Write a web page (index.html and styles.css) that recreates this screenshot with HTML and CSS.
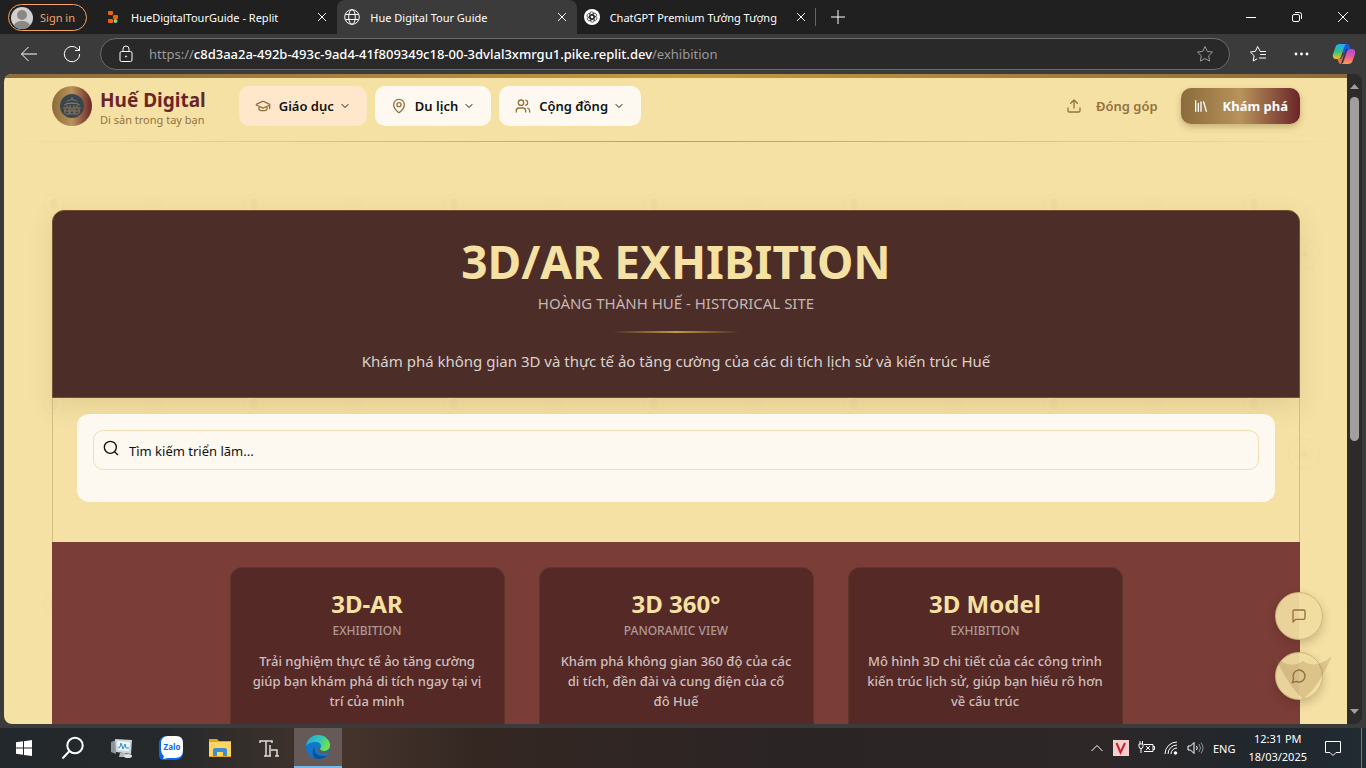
FILE: index.html
```html
<!DOCTYPE html>
<html lang="vi">
<head>
<meta charset="utf-8">
<title>Hue Digital Tour Guide</title>
<link rel="stylesheet" href="styles.css">
</head>
<body>
<div class="tabbar">
  <button class="signin">
    <svg width="24" height="24" viewBox="0 0 24 24"><defs><clipPath id="av"><circle cx="12" cy="12" r="11"/></clipPath></defs><circle cx="12" cy="12" r="11" fill="#d2d0ce"/><g clip-path="url(#av)" fill="#8a8886"><circle cx="12" cy="9" r="5"/><ellipse cx="12" cy="20" rx="8" ry="5"/></g></svg>
    <span>Sign in</span>
  </button>
  <div class="tabs">
    <div class="tab">
      <svg width="16" height="16" viewBox="0 0 16 16"><g fill="#f26207"><rect x="3" y="2" width="5" height="4" rx="1"/><rect x="8" y="6" width="5" height="4" rx="1"/><rect x="3" y="10" width="5" height="4" rx="1"/></g><circle cx="10.500" cy="12" r="2" fill="#6bdc8a"/></svg>
      <span class="tab-name">HueDigitalTourGuide - Replit</span>
      <button class="tab-close" aria-label="Close tab"><svg width="10" height="10" viewBox="0 0 10 10"><path d="M1 1l8 8M9 1l-8 8"/></svg></button>
    </div>
    <div class="tab tab-active">
      <svg class="line" width="16" height="16" viewBox="0 0 16 16"><circle cx="8" cy="8" r="7.300"/><ellipse cx="8" cy="8" rx="3.300" ry="7.300"/><path d="M1.500 5.500h13M1.500 10.500h13"/></svg>
      <span class="tab-name">Hue Digital Tour Guide</span>
      <button class="tab-close" aria-label="Close tab"><svg width="10" height="10" viewBox="0 0 10 10"><path d="M1 1l8 8M9 1l-8 8"/></svg></button>
    </div>
    <div class="tab">
      <svg width="16" height="16" viewBox="0 0 16 16"><circle cx="8" cy="8" r="8" fill="#fff"/><g fill="none" stroke="#222" stroke-width=".7"><rect x="5.700" y="2.800" width="4" height="7.500" rx="2"/><rect x="5.700" y="2.800" width="4" height="7.500" rx="2" transform="rotate(60 8 8)"/><rect x="5.700" y="2.800" width="4" height="7.500" rx="2" transform="rotate(120 8 8)"/><rect x="5.700" y="2.800" width="4" height="7.500" rx="2" transform="rotate(180 8 8)"/><rect x="5.700" y="2.800" width="4" height="7.500" rx="2" transform="rotate(240 8 8)"/><rect x="5.700" y="2.800" width="4" height="7.500" rx="2" transform="rotate(300 8 8)"/></g></svg>
      <span class="tab-name">ChatGPT Premium Tưởng Tượng</span>
      <button class="tab-close" aria-label="Close tab"><svg width="10" height="10" viewBox="0 0 10 10"><path d="M1 1l8 8M9 1l-8 8"/></svg></button>
    </div>
  </div>
  <button class="newtab" aria-label="New tab"><svg width="14" height="14" viewBox="0 0 14 14"><path d="M7 0v14M0 7h14"/></svg></button>
  <div class="winctl">
    <button aria-label="Minimize"><svg width="12" height="12" viewBox="0 0 12 12"><path d="M1 6.500h10"/></svg></button>
    <button aria-label="Restore"><svg width="12" height="12" viewBox="0 0 12 12"><rect x="1.500" y="3.500" width="7" height="7" rx="1.500"/><path d="M4 1.500h4.500a2 2 0 0 1 2 2V8"/></svg></button>
    <button aria-label="Close"><svg width="12" height="12" viewBox="0 0 12 12"><path d="M1 1l10 10M11 1L1 11"/></svg></button>
  </div>
</div>
<div class="toolbar">
  <button class="tool" aria-label="Back"><svg width="18" height="18" viewBox="0 0 18 18"><path d="M17 9H1.500M8.500 2L1.500 9l7 7"/></svg></button>
  <button class="tool" aria-label="Refresh"><svg width="18" height="18" viewBox="0 0 18 18"><path d="M16.700 9A7.700 7.700 0 1 1 14.500 3.700L16.500 5.500M16.500 1v4.500H12"/></svg></button>
  <div class="address">
    <svg class="line" width="16" height="18" viewBox="0 0 16 18"><rect x="2" y="6.500" width="12" height="10" rx="1.500"/><path d="M5 6.500V4a3 3 0 0 1 6 0v2.500"/><circle cx="8" cy="11.500" r=".6"/></svg>
    <span class="url">https://<b>c8d3aa2a-492b-493c-9ad4-41f809349c18-00-3dvlal3xmrgu1.pike.replit.dev</b>/exhibition</span>
    <button class="fav" aria-label="Favorite"><svg width="18" height="18" viewBox="0 0 18 18"><path d="M9 1.500l2.300 4.900 5.200.7-3.800 3.700.9 5.300L9 13.600l-4.600 2.500.9-5.300L1.500 7.100l5.200-.7z"/></svg></button>
  </div>
  <button class="tool" aria-label="Favorites"><svg width="18" height="18" viewBox="0 0 18 18"><path d="M11 6L8.600 1.500 6.400 6.300l-5 .7 3.700 3.700-.9 5.300 4-2.200M11 6.500h6M11 9.500h6M10 13h7"/></svg></button>
  <button class="tool" aria-label="Settings and more"><svg width="18" height="18" viewBox="0 0 18 18"><g fill="#fff" stroke="none"><circle cx="4" cy="9" r="1.400"/><circle cx="9.500" cy="9" r="1.400"/><circle cx="15" cy="9" r="1.400"/></g></svg></button>
  <button class="tool" aria-label="Copilot"><svg width="24" height="24" viewBox="0 0 24 24"><defs><linearGradient id="c1" x1="0" y1="0" x2="0" y2="1"><stop offset="0" stop-color="#1ab1f5"/><stop offset=".5" stop-color="#35bd8c"/><stop offset="1" stop-color="#f5c518"/></linearGradient><linearGradient id="c2" x1="0" y1="0" x2="0" y2="1"><stop offset="0" stop-color="#a44be8"/><stop offset=".5" stop-color="#ef5897"/><stop offset="1" stop-color="#ffa04a"/></linearGradient></defs><g stroke="none"><path fill="#1e57d9" d="M7 2h8c2 0 2.500 1.500 3 3.500l.6 1.500H14l-2 6z"/><path fill="url(#c1)" d="M8 2h6.500c-1.500.5-2 2-2.500 3.500L9.300 14c-.7 2-1.500 3-3.500 3H4c-3 0-3.700-2.500-2.800-5.500L3.500 5C4.300 2.800 5.500 2 8 2z"/><path fill="#f06b50" d="M9 22c-2 0-2.500-1.500-3-3.500L5.500 17H9l3-5z"/><path fill="url(#c2)" d="M16 22H9.500c1.500-.5 2-2 2.500-3.500l2.700-8.500c.7-2 1.500-3 3.500-3H20c3 0 3.700 2.500 2.800 5.500L20.500 19c-.8 2.200-2 3-4.500 3z"/></g></svg></button>
</div>

<div class="viewport">
  <div class="page">
    <svg class="motifs" width="100%" height="100%" aria-hidden="true">
      <defs><pattern id="motif" width="200" height="200" patternUnits="userSpaceOnUse"><g fill="none" stroke="#8b6b3c"><circle cx="50" cy="130" r="10"/><circle cx="100" cy="180" r="15"/></g><g fill="#8b6b3c"><ellipse cx="50" cy="130" rx="4" ry="6"/><circle cx="100" cy="180" r="3"/><circle cx="100" cy="180" r="9" opacity=".3"/><rect x="140" y="121" width="20" height="20" rx="4" opacity=".25"/></g></pattern></defs>
      <rect y="110" width="100%" height="100%" fill="url(#motif)" opacity=".04"/>
    </svg>
    <header class="site-header">
      <a class="brand" href="#">
        <span class="logo"><svg width="24" height="24" viewBox="0 0 24 24"><circle cx="12" cy="12" r="12" fill="#3b4550"/><g fill="none" stroke="#8c7b55" stroke-width=".9"><path d="M7 7.500q5-4 10 0M4 11q8-4 16 0M6 9.500h12M3 14h18M4 17h16M6 20h12M7 11v3M10 11v3M14 11v3M17 11v3M5 14v6M9 14v6M15 14v6M19 14v6M12 3v3"/><path d="M10 20v-3a2 2 0 0 1 4 0v3"/></g></svg></span>
        <span class="brand-text"><span class="brand-name">Huế Digital</span><span class="brand-tag">Di sản trong tay bạn</span></span>
      </a>
      <nav class="menu">
        <button class="menu-item menu-current"><svg class="ico" width="16" height="16" viewBox="0 0 24 24"><path d="M21.400 10.900a1 1 0 0 0 0-1.800L12.800 5.200a2 2 0 0 0-1.700 0l-8.500 3.900a1 1 0 0 0 0 1.800l8.600 3.900a2 2 0 0 0 1.700 0zM22 10v6M6 12.500V16a6 3 0 0 0 12 0v-3.500"/></svg>Giáo dục<svg class="chev" width="12" height="12" viewBox="0 0 24 24"><path d="M6 9l6 6 6-6"/></svg></button>
        <button class="menu-item"><svg class="ico" width="16" height="16" viewBox="0 0 24 24"><path d="M20 10c0 5-5.500 10.200-7.400 11.800a1 1 0 0 1-1.200 0C9.500 20.200 4 15 4 10a8 8 0 0 1 16 0"/><circle cx="12" cy="10" r="3"/></svg>Du lịch<svg class="chev" width="12" height="12" viewBox="0 0 24 24"><path d="M6 9l6 6 6-6"/></svg></button>
        <button class="menu-item"><svg class="ico" width="16" height="16" viewBox="0 0 24 24"><path d="M16 21v-2a4 4 0 0 0-4-4H6a4 4 0 0 0-4 4v2M22 21v-2a4 4 0 0 0-3-3.900M16 3.100a4 4 0 0 1 0 7.800"/><circle cx="9" cy="7" r="4"/></svg>Cộng đồng<svg class="chev" width="12" height="12" viewBox="0 0 24 24"><path d="M6 9l6 6 6-6"/></svg></button>
      </nav>
      <div class="actions">
        <button class="contribute"><svg class="ico" width="16" height="16" viewBox="0 0 24 24"><path d="M21 15v4a2 2 0 0 1-2 2H5a2 2 0 0 1-2-2v-4M17 8l-5-5-5 5M12 3v12"/></svg>Đóng góp</button>
        <button class="explore"><svg width="16" height="16" viewBox="0 0 24 24"><path d="M16 6l4 14M12 6v14M8 8v12M4 4v16"/></svg>Khám phá</button>
      </div>
    </header>

    <main class="panel">
      <section class="hero">
        <h1>3D/AR EXHIBITION</h1>
        <p class="hero-sub">HOÀNG THÀNH HUẾ - HISTORICAL SITE</p>
        <div class="rule"></div>
        <p class="hero-text">Khám phá không gian 3D và thực tế ảo tăng cường của các di tích lịch sử và kiến trúc Huế</p>
      </section>
      <section class="search-area">
        <div class="search-card">
          <label class="search-box">
            <svg width="16" height="16" viewBox="0 0 24 24"><circle cx="11" cy="11" r="9"/><path d="M22 22l-4.500-4.500"/></svg>
            <input type="text" aria-label="Tìm kiếm triển lãm" placeholder="Tìm kiếm triển lãm...">
          </label>
        </div>
      </section>
      <section class="features">
        <article class="card"><h2>3D-AR</h2><p class="card-sub">EXHIBITION</p><p class="card-text">Trải nghiệm thực tế ảo tăng cường giúp bạn khám phá di tích ngay tại vị trí của mình</p></article>
        <article class="card"><h2>3D 360°</h2><p class="card-sub">PANORAMIC VIEW</p><p class="card-text">Khám phá không gian 360 độ của các di tích, đền đài và cung điện của cố đô&nbsp;Huế</p></article>
        <article class="card"><h2>3D Model</h2><p class="card-sub">EXHIBITION</p><p class="card-text">Mô hình 3D chi tiết của các công trình kiến trúc lịch sử, giúp bạn hiểu rõ hơn về cấu trúc</p></article>
      </section>
    </main>

    <div class="floats">
      <button class="float" aria-label="Feedback"><svg width="16" height="16" viewBox="0 0 24 24"><path d="M21 15a2 2 0 0 1-2 2H7l-4 4V5a2 2 0 0 1 2-2h14a2 2 0 0 1 2 2z"/></svg></button>
      <button class="float" aria-label="Chat"><svg width="16" height="16" viewBox="0 0 24 24"><path d="M7.900 20A9 9 0 1 0 4 16.100L2 22z"/></svg></button>
      <svg class="crest" width="58" height="44" viewBox="0 0 58 44" aria-hidden="true"><path d="M0 1Q15 14 28 5Q41 14 57 0Q43 32 28 43Q14 31 0 1z" fill="#8b6b3c"/></svg>
    </div>
  </div>
  <div class="scrollbar">
    <svg width="9" height="5" viewBox="0 0 9 5"><path d="M4.500 0L9 5H0z"/></svg>
    <div class="track"><div class="thumb"></div></div>
    <svg width="9" height="5" viewBox="0 0 9 5"><path d="M0 0h9L4.500 5z"/></svg>
  </div>
</div>

<div class="taskbar">
  <div class="apps">
    <button class="app" aria-label="Start"><svg width="16" height="16" viewBox="0 0 16 16" fill="#fff"><path d="M0 2.300L7 1.300V7.600H0zM8 1.200L16 0V7.600H8zM0 8.500H7V14.800L0 13.800zM8 8.500H16V16L8 14.900z"/></svg></button>
    <button class="app" aria-label="Search"><svg width="24" height="24" viewBox="0 0 24 24" fill="none" stroke="#fff" stroke-width="2"><circle cx="14" cy="9.500" r="7.700"/><path d="M8.500 15L1.500 22.500"/></svg></button>
    <button class="app" aria-label="Monitor"><svg width="24" height="24" viewBox="0 0 24 24"><path d="M1 6l5-2v14l-5-2z" fill="#8b949b"/><path d="M5 3l17 1-1 14-15-2z" fill="#cfd4d7"/><path d="M7 5l13 1-1 9-11-1z" fill="#edf4f8"/><path d="M8 12l2-1 1-4 2 6 2-5 1 4h3" fill="none" stroke="#2a8fd0"/><path d="M10 17h5l3 4H9z" fill="#b5babd"/><ellipse cx="18" cy="20" rx="4" ry="2" fill="#dfe2e4"/></svg></button>
    <button class="app" aria-label="Zalo"><svg width="24" height="24" viewBox="0 0 24 24"><path d="M8 0h9q7 0 7 7v9q0 8-8 8H5q-5 0-5-5V8q0-8 8-8z" fill="#0568f5"/><path d="M9 0h8q7 0 7 7v7q0 8-8 8H9l-5 1 1-3Q2 18 2 13V8q0-8 7-8z" fill="#fff"/><text x="13" y="14" text-anchor="middle" class="zalo">Zalo</text></svg></button>
    <button class="app" aria-label="File Explorer"><svg width="24" height="24" viewBox="0 0 24 24"><path d="M1 3h8l2 2h12v16H1z" fill="#e8a317"/><path d="M1 6h22v14H1z" fill="#ffd561"/><path d="M5 20v-6q0-2 2-2h10q2 0 2 2v6h-4v-4H9v4z" fill="#3b8fd0"/></svg></button>
    <button class="app" aria-label="Typing"><svg width="24" height="24" viewBox="0 0 24 24" fill="none" stroke="#ddd" stroke-width="1.500"><path d="M3 7V5h12v2M9 5v15M7 20h4M13 9v11M14 14h6v6M11 20h3M18 20h4"/></svg></button>
    <button class="app app-active" aria-label="Edge"><svg width="24" height="24" viewBox="0 0 24 24"><defs><linearGradient id="e1" x1="0" y1="0" x2="1" y2=".4"><stop offset="0" stop-color="#20a4dc"/><stop offset=".6" stop-color="#35c7b5"/><stop offset="1" stop-color="#6fe34a"/></linearGradient></defs><circle cx="12" cy="12" r="12" fill="#1277c9"/><path d="M0 11C1 4 6 0 12 0c7 0 12 5 12 10 0 4-3 6-6 6-3 0-4-1-4-2s1-1 1-3c0-2-2-4-5-4C5 7 1 9 0 11z" fill="url(#e1)"/><path d="M9 11c-2 5 2 11 9 10 2 0 3-1 4-2-2 3-6 5-10 5C5 24 6 14 9 11z" fill="#0c4f9b"/><path d="M14 14c1 3 5 3 8 1l1 2c-6 3-12 1-11-4z" fill="#655a58"/></svg></button>
  </div>
  <div class="tray">
    <svg width="14" height="14" viewBox="0 0 14 14"><path d="M1.500 10L7 4.500l5.500 5.500"/></svg>
    <svg width="16" height="16" viewBox="0 0 16 16"><rect width="16" height="16" fill="#f4cfcf" stroke="none"/><path d="M3.500 3l4 9.500L12 3" stroke="#cf2027" stroke-width="2"/></svg>
    <svg width="17" height="14" viewBox="0 0 17 14"><path d="M6 3.500h9v7H6M15 5.500h1.500v3H15M8 5l4 4M12 5L8 9M1 3h4v2.500a2 2 0 0 1-4 0zM2 0v3M4.500 0v3M3 7v5"/></svg>
    <svg width="14" height="14" viewBox="0 0 14 14"><path d="M1 13A12 12 0 0 1 13 1M4 13a9 9 0 0 1 9-9M7 13a6 6 0 0 1 6-6"/><circle cx="11.500" cy="12" r="1.300" fill="#fff"/></svg>
    <svg width="17" height="14" viewBox="0 0 17 14"><path d="M1 5h2.500L7 1.500v11L3.500 9H1zM9.500 5q1.500 2 0 4"/><path d="M12 3q3 4 0 8M14 1.500q4 5.500 0 11" opacity=".5"/></svg>
    <span class="lang">ENG</span>
    <span class="clock"><span>12:31 PM</span><span>18/03/2025</span></span>
    <svg class="notify" width="18" height="18" viewBox="0 0 18 18"><path d="M1.500 2.500h15v11H12L9 16.500 6 13.500H1.500z"/></svg>
  </div>
</div>
</body>
</html>
```
FILE: styles.css
```css
* { box-sizing: border-box; }
body, h1, h2, p { margin: 0; }
body {
  display: flex; flex-direction: column; height: 100vh; overflow: hidden;
  background: #3b3b3b; color: #fff;
  font-family: "Noto Sans", "Open Sans", sans-serif; font-size: 13px;
}
button { font: inherit; color: inherit; background: none; border: 0; padding: 0; cursor: pointer; display: flex; align-items: center; justify-content: center; }
svg { display: block; flex: none; }

/* Browser chrome */
.tabbar { display: flex; height: 34px; flex: none; background: #202020; font-size: 11px; }
.tabbar svg path, .toolbar svg, .line { fill: none; stroke: #fff; }
.signin { height: 27px; width: 79px; margin: 4px 9px 0 8px; gap: 6px; justify-content: flex-start; padding-left: 1px; border: 1px solid #f5a26b; border-radius: 14px; color: #f5a26b; }
.tabs { display: flex; width: 720px; }
.tab { flex: 1; min-width: 0; display: flex; align-items: center; gap: 10px; padding: 0 10px 0 9px; }
.tab + .tab { padding-left: 7px; }
.tab-active { background: #3b3b3b; border-radius: 8px 8px 0 0; }
.tab-name { flex: 1; white-space: nowrap; overflow: hidden; }
.newtab { width: 44px; height: 18px; margin-top: 8px; margin-left: -1px; border-left: 1px solid #666; }
.winctl { display: flex; margin-left: auto; }
.winctl button { width: 46px; }
.winctl svg rect { fill: none; stroke: #fff; }
.toolbar { display: flex; align-items: center; height: 40px; flex: none; padding: 0 1px 0 7px; }
.tool { width: 43px; height: 32px; }
.address { flex: 1; display: flex; align-items: center; height: 32px; margin: 0 6px 0 7px; padding: 0 15px 0 17px; gap: 15px; border: 1px solid #6b6b6b; border-radius: 16px; background: #292929; }
.url { flex: 1; color: #9a9a9a; font-size: 13px; white-space: nowrap; }
.url b { color: #fff; font-weight: 500; }
.fav svg { stroke: #9a9a9a; }

.viewport { flex: 1; min-height: 0; display: flex; margin: 0 4px 4px; border-radius: 8px; overflow: hidden; background: #2b2b2b; }
.page { flex: 1; position: relative; overflow: hidden; background: #f5e1a4; }
.page::before { content: ""; display: block; height: 4px; background: linear-gradient(90deg, #8b6b3c, #c49a3f, #8b6b3c); }
.scrollbar { width: 15px; display: flex; flex-direction: column; align-items: center; padding: 10px 0; gap: 8px; }
.scrollbar path { fill: #9f9f9f; }
.track { flex: 1; width: 9px; }
.thumb { height: 57%; border-radius: 5px; background: #9f9f9f; }
.motifs { position: absolute; inset: 0; }

/* Site header */
.site-header { position: relative; display: flex; align-items: center; height: 64px; padding: 0 47px 8px 48px; }
.site-header::after { content: ""; position: absolute; left: 0; right: 0; bottom: 0; height: 1px; background: linear-gradient(90deg, transparent, #c09a68, transparent); }
.brand { display: flex; align-items: center; gap: 8px; text-decoration: none; }
.logo { display: grid; place-items: center; width: 40px; height: 40px; border-radius: 50%; background: linear-gradient(90deg, #8b6b3c, #b8935a 50%, #6b2529); }
.brand-text { display: flex; flex-direction: column; padding-top: 2px; white-space: nowrap; }
.brand-name { color: #6b2529; font-size: 19px; font-weight: 700; line-height: 26px; }
.brand-tag { color: #94713f; font-size: 11px; line-height: 14px; }
.menu { display: flex; gap: 8px; margin-left: 33px; }
.menu-item { height: 40px; padding: 0 16px; gap: 8px; border-radius: 10px; background: #fdf9f1; color: #111; font-weight: 600; white-space: nowrap; }
.menu-current { background: #fee7cb; }
.ico, .chev, .explore svg, .search-box svg, .float svg { fill: none; stroke: currentColor; stroke-width: 2; stroke-linecap: round; stroke-linejoin: round; }
.ico { color: #94713f; }
.chev { margin-left: -3px; }
.actions { display: flex; align-items: center; gap: 23px; margin-left: auto; font-weight: 600; white-space: nowrap; }
.contribute { gap: 14px; color: #94713f; }
.explore { height: 36px; padding: 0 12px; gap: 14px; border-radius: 10px; color: #fff; font-weight: 700; background: linear-gradient(90deg, #8b6b3c, #b8935a 50%, #6b2529); box-shadow: 0 3px 6px rgba(90, 60, 20, .3); }

/* Exhibition panel */
.panel { position: relative; margin: 68px 47px 0 48px; text-align: center; }
.hero { display: flex; flex-direction: column; align-items: center; padding: 25px 24px 22px; border: 1px solid #75502f; border-radius: 12px 12px 0 0; background: #4c2d27; box-shadow: 0 8px 24px rgba(139, 107, 60, .16); }
.hero h1 { color: #f5e1a4; font-size: 46px; line-height: 50px; font-weight: 700; }
.hero-sub { margin-top: 3px; color: #c4b7b3; font-size: 15px; line-height: 28px; }
.rule { width: 128px; height: 2px; margin: 14px 0; background: linear-gradient(90deg, transparent, #c49a3f, transparent); }
.hero-text { color: #dbd2cf; font-size: 15px; line-height: 28px; }
.search-area { padding: 16px 24px 40px; border: solid #d3bc83; border-width: 0 1px; }
.search-card { padding: 16px 16px 32px; border-radius: 12px; background: #fdf9f1; }
.search-box { display: flex; align-items: center; height: 40px; padding: 0 9px; gap: 10px; border: 1px solid #f1dcb4; border-radius: 10px; color: #111; }
.search-box svg { margin-bottom: 4px; }
.search-box input { flex: 1; min-width: 0; padding: 2px 0 0; border: 0; outline: 0; background: none; font: inherit; color: inherit; }
.search-box input::placeholder { color: #111; opacity: 1; }
.features { display: grid; grid-template-columns: repeat(3, minmax(0, 275px)); justify-content: center; gap: 34px; padding: 25px; background: #7a3d37; }
.card { padding: 20px 18px 24px; border: 1px solid #5f3529; border-radius: 12px; background: #552926; }
.card h2 { color: #f5e1a4; font-size: 24px; line-height: 32px; }
.card-sub { color: #ad9896; font-size: 12px; font-weight: 500; line-height: 22px; }
.card-text { margin-top: 9px; color: #cdbfbe; font-size: 13px; font-weight: 500; line-height: 20px; }

.floats { position: absolute; right: 24px; bottom: 24px; display: grid; gap: 12px; }
.float { width: 48px; height: 48px; border: 1px solid #cdb27c; border-radius: 50%; background: linear-gradient(90deg, #ead29b 50%, #f2dda0 51%); color: #94713f; box-shadow: 0 4px 10px rgba(60, 30, 10, .22); }
.crest { position: absolute; left: 0; bottom: 0; opacity: .22; pointer-events: none; }

/* Taskbar */
.taskbar { flex: none; display: flex; height: 40px; background: linear-gradient(90deg, #23282c, #26292b 12%, #45342c 25%, #342722 35%, #2a2425 60%, #2e2727 80%, #20272e 92%, #222a32); }
.apps { display: flex; gap: 1px; }
.app { width: 48px; }
.app-active { background: #655a58; border-bottom: 2px solid #76b9ed; }
.zalo { font: 700 8px "Open Sans", sans-serif; fill: #0568f5; }
.tray { display: flex; align-items: center; gap: 9px; margin: 0 4px 0 auto; padding-right: 19px; border-right: 1px solid #777; font-size: 11px; }
.tray svg { fill: none; stroke: #fff; }
.clock { display: flex; flex-direction: column; align-items: center; line-height: 18px; font-size: 11px; margin-left: 4px; }
.notify { margin-left: 8px; }
```
